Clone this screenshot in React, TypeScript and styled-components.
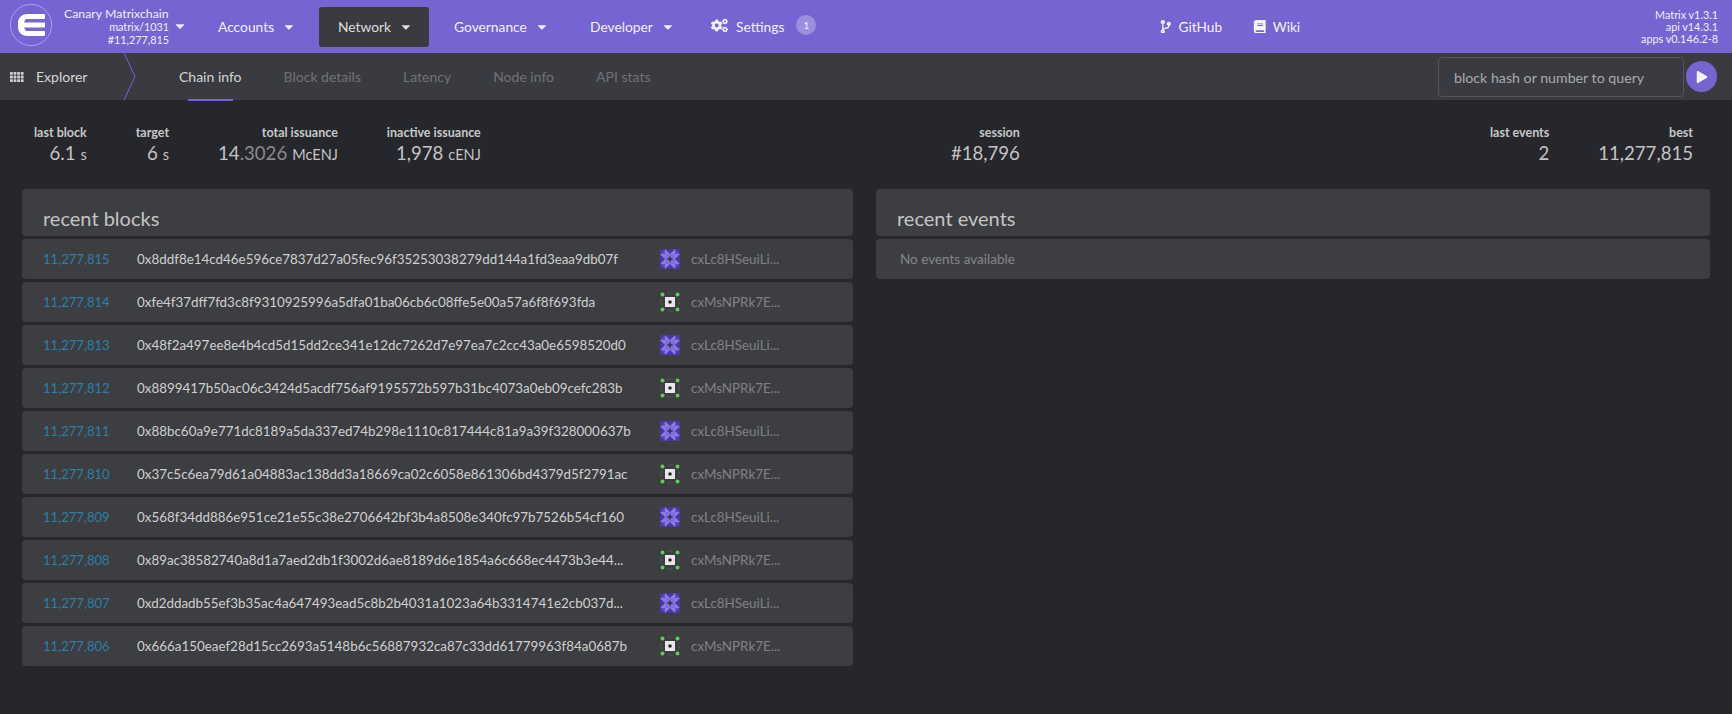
import React from "react";
import styled, { createGlobalStyle } from "styled-components";
import { FaCaretDown, FaCogs, FaCodeBranch, FaBook, FaPlay } from "react-icons/fa";

const GlobalStyle = createGlobalStyle`
  html, body {
    margin: 0;
    padding: 0;
    background: #26272c;
    font-family: Lato, "Open Sans", sans-serif;
    color: #d3d3d3;
  }
  * {
    box-sizing: border-box;
  }
`;

const Page = styled.div`
  width: 1732px;
  height: 714px;
  overflow: hidden;
  background: #26272c;
`;

const TopBar = styled.div`
  height: 53px;
  background: #7764d3;
  display: flex;
  align-items: center;
  color: #f5f3fc;
  padding: 0 14px 0 10px;
`;

const Logo = styled.svg`
  width: 42px;
  height: 42px;
  flex: none;
  margin-top: -3px;
`;

const ChainInfo = styled.div`
  width: 135px;
  margin-left: 12px;
  padding-right: 30px;
  font-size: 10.8px;
  line-height: 13.3px;
  text-align: right;
  display: flex;
  flex-direction: column;
  align-items: flex-end;
  color: #efecfa;
  white-space: nowrap;
`;

const ChainName = styled.div`
  align-self: flex-start;
  font-size: 12.3px;
`;

const ChainCaret = styled.span`
  position: relative;
`;

const ChainCaretIcon = styled(FaCaretDown)`
  position: absolute;
  right: -18px;
  top: -1px;
  font-size: 14px;
`;

const Menu = styled.div`
  display: flex;
  align-items: center;
  gap: 6px;
`;

const MenuItem = styled.div<{ $active?: boolean; $width: number }>`
  width: ${(p) => p.$width}px;
  height: 40px;
  border-radius: 3px;
  padding-left: 19px;
  display: flex;
  align-items: center;
  gap: 8px;
  font-size: 13.8px;
  white-space: nowrap;
  background: ${(p) => (p.$active ? "#3a3b40" : "transparent")};
  color: ${(p) => (p.$active ? "#dedede" : "#f3f1fb")};
`;

const SettingsIcon = styled(FaCogs)`
  font-size: 17px;
  margin-top: -3px;
`;

const Badge = styled.span`
  width: 20px;
  height: 20px;
  border-radius: 50%;
  background: #9d8fe0;
  font-size: 10px;
  display: flex;
  align-items: center;
  justify-content: center;
  margin: -4px 0 0 4px;
`;

const ExternalLinks = styled.div`
  display: flex;
  align-items: center;
  gap: 31px;
  margin-left: 337px;
  font-size: 13.6px;
`;

const ExternalLink = styled.span`
  display: flex;
  align-items: center;
  gap: 6px;
`;

const Versions = styled.div`
  margin-left: auto;
  margin-top: 1px;
  font-size: 10.8px;
  line-height: 12.3px;
  text-align: right;
  color: #efecfa;
`;

const SubBar = styled.div`
  height: 47px;
  background: #3a3b40;
  display: flex;
  align-items: center;
`;

const SectionLabel = styled.div`
  width: 137px;
  height: 47px;
  padding-left: 10px;
  display: flex;
  align-items: center;
  gap: 12px;
  font-size: 14px;
  color: #d6d6d6;
  position: relative;
  flex: none;
`;

const GridIcon = styled.svg`
  width: 14px;
  height: 10px;
  flex: none;
`;

const SectionArrow = styled.svg`
  position: absolute;
  right: 0;
  top: 0;
  width: 14px;
  height: 47px;
`;

const Tabs = styled.div`
  display: flex;
  align-items: center;
  height: 47px;
  margin-left: 42px;
  gap: 42px;
`;

const Tab = styled.div<{ $active?: boolean }>`
  height: 47px;
  display: flex;
  align-items: center;
  font-size: 14px;
  color: ${(p) => (p.$active ? "#d3d3d3" : "#717276")};
  position: relative;

  ${(p) =>
    p.$active &&
    `&::after {
      content: "";
      position: absolute;
      left: 9px;
      right: 9px;
      bottom: -1px;
      height: 2px;
      background: #7764d3;
    }`}
`;

const QueryBox = styled.div`
  margin-left: auto;
  display: flex;
  align-items: center;
  gap: 2px;
  padding-right: 15px;
`;

const QueryInput = styled.div`
  width: 246px;
  height: 40px;
  border: 1px solid #55565b;
  border-radius: 4px;
  padding-left: 15px;
  margin-top: 1px;
  display: flex;
  align-items: center;
  font-size: 14.2px;
  white-space: nowrap;
  color: #a9aaab;
`;

const QueryButton = styled.div`
  width: 31px;
  height: 31px;
  border-radius: 50%;
  background: #7764d3;
  color: #f5f3fc;
  display: flex;
  align-items: center;
  justify-content: center;
  font-size: 12px;
`;

const Summary = styled.div`
  height: 89px;
  padding: 26px 39px 0 34px;
  display: flex;
  align-items: flex-start;
  justify-content: space-between;
`;

const StatGroup = styled.div`
  display: flex;
  gap: 49px;
`;

const Stat = styled.div`
  text-align: right;
`;

const StatLabel = styled.div`
  font-size: 12.5px;
  font-weight: 700;
  line-height: 14px;
  color: #c8c8c8;
`;

const StatValue = styled.div`
  font-size: 18.6px;
  line-height: 24px;
  margin-top: 1px;
  color: #c4c4c4;
`;

const Dim = styled.span`
  color: #8a8a8d;
`;

const Unit = styled.span`
  font-size: 14.5px;
  margin-left: 5px;
`;

const Columns = styled.div`
  display: grid;
  grid-template-columns: 831px 834px;
  gap: 23px;
  padding-left: 22px;
`;

const Table = styled.div`
  display: flex;
  flex-direction: column;
  gap: 3px;
`;

const TableHead = styled.div`
  height: 47px;
  background: #3d3e42;
  border-radius: 4px;
  padding: 17px 0 0 21px;
  font-size: 20px;
  line-height: 24px;
  color: #c4c4c4;
`;

const Row = styled.div`
  height: 40px;
  background: #3d3e42;
  border-radius: 4px;
  display: flex;
  align-items: center;
  font-size: 13.4px;
  padding: 0 0 1px 21px;
`;

const BlockLink = styled.span`
  width: 94px;
  font-size: 13.1px;
  color: #2b7fa8;
  flex: none;
`;

const BlockHash = styled.span`
  width: 523px;
  padding-right: 24px;
  color: #d0d0d0;
  white-space: nowrap;
  overflow: hidden;
  text-overflow: ellipsis;
  flex: none;
`;

const Author = styled.span`
  display: flex;
  align-items: center;
  gap: 11px;
  color: #818184;
`;

const EmptyRow = styled(Row)`
  color: #85858a;
  font-size: 13.5px;
  padding-left: 24px;
`;

const IdentSvg = styled.svg`
  width: 20px;
  height: 20px;
  flex: none;
`;

const PurpleIdent = () => (
  <IdentSvg viewBox="0 0 20 20">
    {[0, 90, 180, 270].map((angle) => (
      <g key={angle} transform={`rotate(${angle} 10 10)`}>
        <path fill="#4a35ad" d="M5 0H15L10 5z" />
        <path fill="#8c7de0" d="M5 0L10 5H5zM15 0L10 5H15z" />
        <path fill="#5f4dc4" d="M0 5L5 0V5z" />
        <path fill="#4a35ad" d="M0 0H5L0 5z" />
      </g>
    ))}
    <path fill="#7f6ee2" d="M5 5h10v10H5z" />
    <path fill="#37334f" d="M10 6.500l1 2.500 2.500 1-2.500 1-1 2.500-1-2.500-2.500-1 2.500-1z" />
  </IdentSvg>
);

const GreenIdent = () => (
  <IdentSvg viewBox="0 0 20 20">
    <path fill="#47484c" d="M7 0h6v2H7zM7 18h6v2H7zM0 7h2v6H0zM18 7h2v6h-2z" />
    <path fill="#e8e8e8" d="M5 5h10v10H5z" />
    <circle cx="10" cy="10" r="1.800" fill="#2b2b2e" />
    <circle cx="2.500" cy="2.500" r="2" fill="#5ecb5a" />
    <circle cx="17.500" cy="2.500" r="2" fill="#5ecb5a" />
    <circle cx="2.500" cy="17.500" r="2" fill="#5ecb5a" />
    <circle cx="17.500" cy="17.500" r="2" fill="#5ecb5a" />
  </IdentSvg>
);

const blocks = [
  ["11,277,815", "0x8ddf8e14cd46e596ce7837d27a05fec96f35253038279dd144a1fd3eaa9db07f"],
  ["11,277,814", "0xfe4f37dff7fd3c8f9310925996a5dfa01ba06cb6c08ffe5e00a57a6f8f693fda"],
  ["11,277,813", "0x48f2a497ee8e4b4cd5d15dd2ce341e12dc7262d7e97ea7c2cc43a0e6598520d0"],
  ["11,277,812", "0x8899417b50ac06c3424d5acdf756af9195572b597b31bc4073a0eb09cefc283b"],
  ["11,277,811", "0x88bc60a9e771dc8189a5da337ed74b298e1110c817444c81a9a39f328000637b"],
  ["11,277,810", "0x37c5c6ea79d61a04883ac138dd3a18669ca02c6058e861306bd4379d5f2791ac"],
  ["11,277,809", "0x568f34dd886e951ce21e55c38e2706642bf3b4a8508e340fc97b7526b54cf160"],
  ["11,277,808", "0x89ac38582740a8d1a7aed2db1f3002d6ae8189d6e1854a6c668ec4473b3e44..."],
  ["11,277,807", "0xd2ddadb55ef3b35ac4a647493ead5c8b2b4031a1023a64b3314741e2cb037d..."],
  ["11,277,806", "0x666a150eaef28d15cc2693a5148b6c56887932ca87c33dd61779963f84a0687b"],
];

const App = () => {
  return (
    <Page>
      <GlobalStyle />
      <TopBar>
        <Logo viewBox="0 0 42 42">
          <circle cx="21" cy="21" r="20.600" fill="none" stroke="#b9afec" strokeWidth="0.8" />
          <path
            d="M17 10H34Q35 10 35 11V14Q35 15 34 15H17C15.500 15 14.500 16.500 14.200 18.500H34Q35 18.500 35 19.500V22.500Q35 23.500 34 23.500H14.200C14.500 25.500 15.500 27 17 27H34Q35 27 35 28V31Q35 32 34 32H17C12 32 8 28 8 23V19C8 14 12 10 17 10Z"
            fill="#fff"
          />
        </Logo>
        <ChainInfo>
          <ChainName>Canary Matrixchain</ChainName>
          <ChainCaret>
            matrix/1031
            <ChainCaretIcon />
          </ChainCaret>
          <div>#11,277,815</div>
        </ChainInfo>
        <Menu>
          <MenuItem $width={114}>
            Accounts <FaCaretDown />
          </MenuItem>
          <MenuItem $active $width={110}>
            Network <FaCaretDown />
          </MenuItem>
          <MenuItem $width={130}>
            Governance <FaCaretDown />
          </MenuItem>
          <MenuItem $width={115}>
            Developer <FaCaretDown />
          </MenuItem>
          <MenuItem $width={130}>
            <SettingsIcon /> Settings <Badge>1</Badge>
          </MenuItem>
        </Menu>
        <ExternalLinks>
          <ExternalLink>
            <FaCodeBranch /> GitHub
          </ExternalLink>
          <ExternalLink>
            <FaBook /> Wiki
          </ExternalLink>
        </ExternalLinks>
        <Versions>
          <div>Matrix v1.3.1</div>
          <div>api v14.3.1</div>
          <div>apps v0.146.2-8</div>
        </Versions>
      </TopBar>

      <SubBar>
        <SectionLabel>
          <GridIcon viewBox="0 0 14 10" fill="#d0d0d0">
            {[0, 3.6, 7.2].map((y) =>
              [0, 3.6, 7.2, 10.8].map((x) => <rect key={`${x}-${y}`} x={x} y={y} width="2.800" height="2.800" rx="0.500" />)
            )}
          </GridIcon>
          Explorer
          <SectionArrow viewBox="0 0 14 47">
            <path d="M1 0L12 23.500L1 47" fill="none" stroke="#7764d3" />
          </SectionArrow>
        </SectionLabel>
        <Tabs>
          <Tab $active>Chain info</Tab>
          <Tab>Block details</Tab>
          <Tab>Latency</Tab>
          <Tab>Node info</Tab>
          <Tab>API stats</Tab>
        </Tabs>
        <QueryBox>
          <QueryInput>block hash or number to query</QueryInput>
          <QueryButton>
            <FaPlay />
          </QueryButton>
        </QueryBox>
      </SubBar>

      <Summary>
        <StatGroup>
          <Stat>
            <StatLabel>last block</StatLabel>
            <StatValue>
              6.1<Unit>s</Unit>
            </StatValue>
          </Stat>
          <Stat>
            <StatLabel>target</StatLabel>
            <StatValue>
              6<Unit>s</Unit>
            </StatValue>
          </Stat>
          <Stat>
            <StatLabel>total issuance</StatLabel>
            <StatValue>
              14<Dim>.3026</Dim>
              <Unit>McENJ</Unit>
            </StatValue>
          </Stat>
          <Stat>
            <StatLabel>inactive issuance</StatLabel>
            <StatValue>
              1,978<Unit>cENJ</Unit>
            </StatValue>
          </Stat>
        </StatGroup>
        <Stat>
          <StatLabel>session</StatLabel>
          <StatValue>#18,796</StatValue>
        </Stat>
        <StatGroup>
          <Stat>
            <StatLabel>last events</StatLabel>
            <StatValue>2</StatValue>
          </Stat>
          <Stat>
            <StatLabel>best</StatLabel>
            <StatValue>11,277,815</StatValue>
          </Stat>
        </StatGroup>
      </Summary>

      <Columns>
        <Table>
          <TableHead>recent blocks</TableHead>
          {blocks.map(([number, hash], i) => (
            <Row key={number}>
              <BlockLink>{number}</BlockLink>
              <BlockHash>{hash}</BlockHash>
              <Author>
                {i % 2 === 0 ? <PurpleIdent /> : <GreenIdent />}
                {i % 2 === 0 ? "cxLc8HSeuiLi..." : "cxMsNPRk7E..."}
              </Author>
            </Row>
          ))}
        </Table>
        <Table>
          <TableHead>recent events</TableHead>
          <EmptyRow>No events available</EmptyRow>
        </Table>
      </Columns>
    </Page>
  );
};

export default App;
